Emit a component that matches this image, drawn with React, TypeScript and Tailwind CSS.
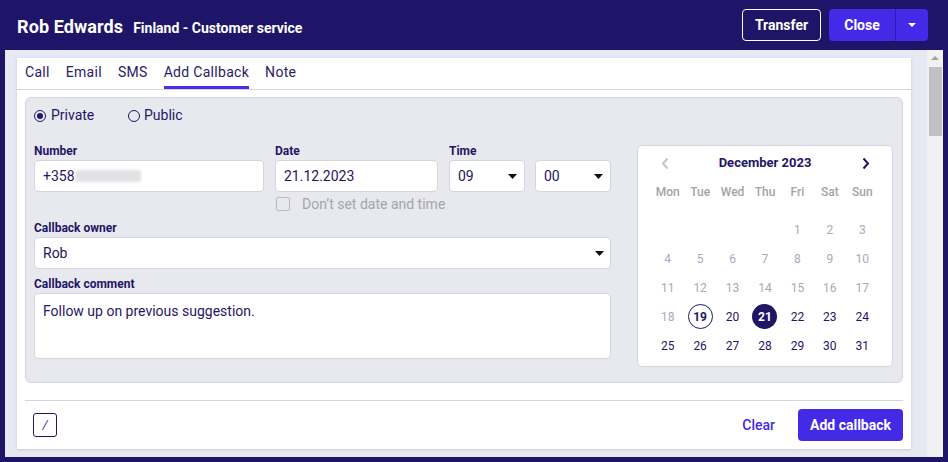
import React from "react";

const NAVY = "text-[#1f1666]";

function Caret() {
  return (
    <svg width="9" height="5" viewBox="0 0 9 5" className="shrink-0">
      <path d="M0 0 L9 0 L4.5 5 Z" fill="#111" />
    </svg>
  );
}

function Label({ children }: { children: React.ReactNode }) {
  return <div className={`text-[12px] font-bold leading-[14px] ${NAVY} mb-[2px] whitespace-nowrap`}>{children}</div>;
}

function Calendar() {
  const days: (number | null)[] = [null, null, null, null, 1, 2, 3];
  for (let d = 4; d <= 31; d++) days.push(d);
  const wk = ["Mon", "Tue", "Wed", "Thu", "Fri", "Sat", "Sun"];
  return (
    <div className="w-[256px] h-[222px] bg-white border border-[#d4d6df] rounded-[5px] flex flex-col items-center">
      <div className="w-[227px] h-[22px] mt-[6px] flex items-center justify-between">
        <div className="w-[26px] flex justify-center">
          <svg width="8" height="13" viewBox="0 0 8 13"><path d="M6.5 1.5 L2 6.5 L6.5 11.5" stroke="#c4c4cc" strokeWidth="2" fill="none" /></svg>
        </div>
        <div className={`text-[13px] font-bold ${NAVY}`}>December 2023</div>
        <div className="w-[26px] flex justify-center">
          <svg width="8" height="13" viewBox="0 0 8 13"><path d="M1.5 1.5 L6 6.5 L1.5 11.5" stroke="#1f1666" strokeWidth="2" fill="none" /></svg>
        </div>
      </div>
      <div className="w-[227px] mt-[8px] grid grid-cols-7 h-[20px] items-center">
        {wk.map((w) => (
          <div key={w} className="text-center text-[12px] font-medium text-[#a3a3ab]">{w}</div>
        ))}
      </div>
      <div className="w-[227px] mt-[13px] grid grid-cols-7">
        {days.map((d, i) => (
          <div key={i} className="h-[29px] flex items-center justify-center">
            {d === null ? null : d === 21 ? (
              <div className="w-[25px] h-[25px] rounded-full bg-[#1f1666] text-white text-[12px] font-bold flex items-center justify-center">21</div>
            ) : d === 19 ? (
              <div className={`w-[25px] h-[25px] rounded-full border border-[#1f1666] ${NAVY} text-[12px] font-bold flex items-center justify-center`}>19</div>
            ) : (
              <span className={`text-[12px] ${d < 19 ? "text-[#aaa7bf]" : "text-[#1f1666]"}`}>{d}</span>
            )}
          </div>
        ))}
      </div>
    </div>
  );
}

export default function App() {
  return (
    <div className="w-[948px] h-[462px] bg-[#1f1568] flex flex-col" style={{ fontFamily: "Roboto, 'Liberation Sans', sans-serif" }}>
      {/* Header */}
      <div className="h-[50px] shrink-0 flex items-center justify-between pl-[17px] pr-[20px] pt-[2px]">
        <div className="flex items-baseline gap-[10px] text-white font-bold">
          <span className="text-[18px] tracking-[0.1px]">Rob Edwards</span>
          <span className="text-[14px]">Finland - Customer service</span>
        </div>
        <div className="flex items-center gap-[8px] -mt-[2px]">
          <button className="h-[32px] w-[79px] border border-white rounded-[4px] text-white text-[14px] font-bold">Transfer</button>
          <div className="flex h-[32px] rounded-[4px] overflow-hidden bg-[#4429e6]">
            <button className="w-[67px] text-white text-[14px] font-bold border-r border-[#2f1ca8]">Close</button>
            <button className="w-[32px] flex items-center justify-center">
              <svg width="8" height="4" viewBox="0 0 8 4"><path d="M0 0 L8 0 L4 4 Z" fill="#fff" /></svg>
            </button>
          </div>
        </div>
      </div>

      {/* Body */}
      <div className="flex-1 mx-[5px] mb-[5px] flex min-h-0">
        <div className="flex-1 min-w-0 bg-[#e6e8f2] pl-[12px] pr-[16px] pt-[8px] pb-[8px] flex">
          <div className="flex-1 min-w-0 bg-white shadow-[0_1px_3px_rgba(0,0,0,0.12)] flex flex-col">
            {/* Tabs */}
            <div className="h-[32px] border-b border-[#d3d6de] flex gap-4 pl-[8px]">
              {["Call", "Email", "SMS", "Add Callback", "Note"].map((t) => (
                <div
                  key={t}
                  className={`h-[31px] flex items-center border-b-[3px] text-[14px] tracking-[0.3px] text-[#2a2066] ${t === "Add Callback" ? "border-[#4a2fe8]" : "border-transparent"}`}
                >
                  {t}
                </div>
              ))}
            </div>

            <div className="px-[8px] flex flex-col">
              {/* Form panel */}
              <div className="mt-[7px] h-[286px] bg-[#e8e9ef] border border-[#d4d6df] rounded-[6px] pl-[8px] pr-[9px] pt-[9px]">
                <div className={`flex items-center h-[17px] text-[14px] ${NAVY}`}>
                  <div className="flex items-center gap-[5px] w-[94px]">
                    <div className="w-[12px] h-[12px] rounded-full border-[1.5px] border-[#1f1666] flex items-center justify-center">
                      <div className="w-[6px] h-[6px] rounded-full bg-[#1f1666]" />
                    </div>
                    <span>Private</span>
                  </div>
                  <div className="flex items-center gap-[4px]">
                    <div className="w-[12px] h-[12px] rounded-full border-[1.5px] border-[#1f1666]" />
                    <span>Public</span>
                  </div>
                </div>

                <div className="flex gap-[26px] mt-[20px]">
                  <div className="w-[577px] flex flex-col">
                    <div className="flex">
                      <div className="w-[230px]">
                        <Label>Number</Label>
                        <div className={`h-[32px] bg-white border border-[#d4d6df] rounded-[4px] flex items-center pl-[8px] text-[14px] ${NAVY}`}>
                          <span>+358</span>
                          <span className="w-[66px] h-[12px] bg-[#e2e2e6] blur-[1.5px]" />
                        </div>
                      </div>
                      <div className="w-[163px] ml-[11px]">
                        <Label>Date</Label>
                        <div className={`h-[32px] bg-white border border-[#d4d6df] rounded-[4px] flex items-center pl-[8px] text-[14px] ${NAVY}`}>21.12.2023</div>
                        <div className="flex items-center mt-[4px] h-[16px] whitespace-nowrap">
                          <div className="w-[14px] h-[14px] shrink-0 border border-[#b7b9c3] rounded-[2px] ml-[1px]" />
                          <span className="ml-[12px] text-[14px] text-[#a3a5b0]">Don’t set date and time</span>
                        </div>
                      </div>
                      <div className="ml-[11px]">
                        <Label>Time</Label>
                        <div className="flex gap-[10px]">
                          <div className={`w-[76px] h-[32px] bg-white border border-[#d4d6df] rounded-[4px] flex items-center justify-between pl-[8px] pr-[7px] text-[14px] ${NAVY}`}>
                            <span>09</span>
                            <Caret />
                          </div>
                          <div className={`w-[76px] h-[32px] bg-white border border-[#d4d6df] rounded-[4px] flex items-center justify-between pl-[8px] pr-[7px] text-[14px] ${NAVY}`}>
                            <span>00</span>
                            <Caret />
                          </div>
                        </div>
                      </div>
                    </div>

                    <div className="mt-[9px]">
                      <Label>Callback owner</Label>
                      <div className={`h-[32px] bg-white border border-[#d4d6df] rounded-[4px] flex items-center justify-between pl-[8px] pr-[6px] text-[14px] ${NAVY}`}>
                        <span>Rob</span>
                        <Caret />
                      </div>
                    </div>

                    <div className="mt-[8px]">
                      <Label>Callback comment</Label>
                      <div className={`h-[66px] bg-white border border-[#d4d6df] rounded-[4px] pl-[8px] pt-[9px] text-[14px] leading-[16px] ${NAVY}`}>
                        Follow up on previous suggestion.
                      </div>
                    </div>
                  </div>
                  <div className="mt-[1px] shrink-0">
                    <Calendar />
                  </div>
                </div>
              </div>

              {/* Divider */}
              <div className="mt-[17px] border-t border-[#d3d6de]" />

              {/* Footer */}
              <div className="h-[48px] flex items-center justify-between">
                <div className="ml-[8px] w-[24px] h-[24px] border border-[#1f1666] rounded-[3px] flex items-center justify-center text-[13px] italic text-[#3a2fd0]">/</div>
                <div className="flex items-center">
                  <span className="text-[14px] font-medium text-[#4429e6] mr-[23px]">Clear</span>
                  <button className="w-[105px] h-[32px] bg-[#4429e6] rounded-[4px] text-white text-[14px] font-bold">Add callback</button>
                </div>
              </div>
            </div>
          </div>
        </div>
        {/* Scrollbar */}
        <div className="w-[16px] shrink-0 bg-[#f1f1f1] flex flex-col items-center pt-[6px]">
          <svg width="8" height="4" viewBox="0 0 8 4"><path d="M0 4 L8 4 L4 0 Z" fill="#a3a3a3" /></svg>
          <div className="mt-[7px] w-[13px] h-[69px] bg-[#c1c1c1]" />
        </div>
      </div>
    </div>
  );
}
